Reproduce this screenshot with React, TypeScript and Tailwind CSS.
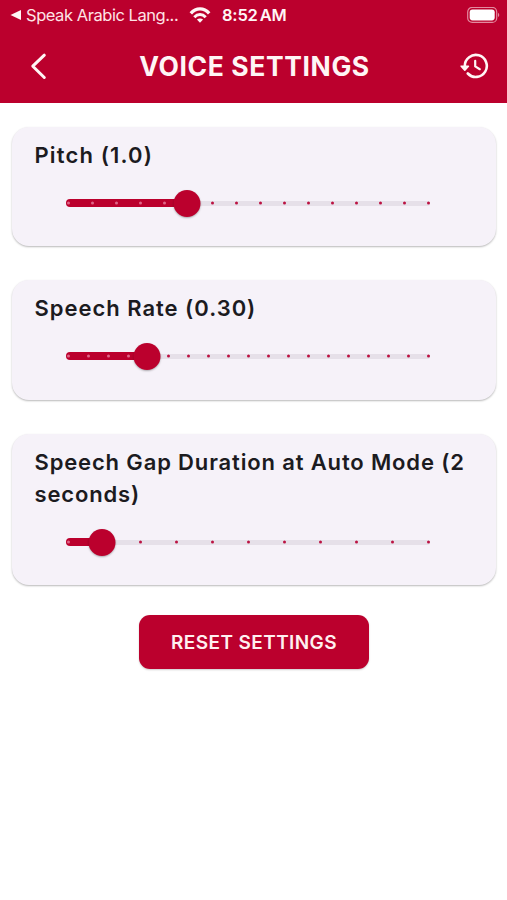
import React from "react";

type SettingProps = {
  title: string;
  steps: number;
  value: number;
  className: string;
};

function Slider({ steps, value }: { steps: number; value: number }) {
  const fill = `${(value / steps) * 100}%`;
  return (
    <div className="relative ml-[31px] flex h-7 w-[364px] items-center">
      <div className="h-[5px] w-full rounded-full bg-[#e6e0e9]" />
      <div
        className="absolute left-0 h-[8px] rounded-l-full bg-[#bb002d]"
        style={{ width: fill }}
      />
      <svg className="absolute left-0" width="364" height="4" viewBox="0 0 364 4">
        {Array.from({ length: steps + 1 }, (_, i) => (
          <circle
            key={i}
            cx={2.5 + (360 / steps) * i}
            cy="2"
            r="1.5"
            className={i < value ? "fill-[#df6688]" : "fill-[#bb1243]"}
          />
        ))}
      </svg>
      <div
        className="absolute size-[27px] -translate-x-1/2 rounded-full bg-[#bb002d] shadow-[0_1px_2px_rgba(0,0,0,0.3)]"
        style={{ left: fill }}
      />
    </div>
  );
}

function Setting({ title, steps, value, className }: SettingProps) {
  return (
    <section
      className={`flex flex-col justify-between rounded-[17px] bg-[#f6f2f9] pr-5 pl-[23px] pt-[12px] shadow-[0_1px_2px_rgba(0,0,0,0.28)] ${className}`}
    >
      <h2 className="-ml-[0.5px] text-[22px] leading-8 font-semibold text-[#1c1b1f]">
        {title}
      </h2>
      <Slider steps={steps} value={value} />
    </section>
  );
}

export default function App() {
  return (
    <div className="flex h-[900px] w-[507px] flex-col bg-white font-['Inter',sans-serif]">
      <header className="flex h-[103px] flex-col bg-[#bb002d] text-[#fff5f5]">
        <div className="flex h-[30px] items-center pl-[10px] pr-[7px]">
          <svg width="12" height="12" viewBox="0 0 12 12" fill="currentColor">
            <path d="M0.5 6 11 1v10z" />
          </svg>
          <span className="ml-[4px] w-[163px] text-[16.5px] leading-none tracking-[-0.45px] whitespace-nowrap text-[#ffe3e6]">
            Speak Arabic Lang...
          </span>
          <svg width="22" height="16" viewBox="0 0 22 16" fill="none" stroke="currentColor" strokeWidth="3.3">
            <path d="M1.8 6.3C7 .3 15 .3 20.2 6.3" />
            <path d="M5.3 10.2c3.3-3.5 8.1-3.5 11.4 0" strokeWidth="3" />
            <path d="M11 15.7 7.9 12.6c1.8-1.6 4.4-1.6 6.2 0z" fill="currentColor" stroke="none" />
          </svg>
          <span className="ml-[11px] text-[16.5px] leading-none font-semibold tracking-[-0.2px] whitespace-nowrap [word-spacing:-2px]">
            8:52 AM
          </span>
          <svg className="ml-auto" width="33" height="17" viewBox="0 0 33 17" fill="none">
            <rect x=".7" y=".4" width="29" height="15" rx="4.5" stroke="#e38a9f" strokeWidth="1.2" />
            <rect x="2.7" y="2.4" width="25" height="11" rx="2.8" fill="#fff" />
            <path d="M31 5.7c1.7.7 1.7 3.7 0 4.4z" fill="#e38a9f" />
          </svg>
        </div>
        <div className="flex h-[73px] items-center justify-between pl-[30px] pr-[17px]">
          <svg width="18" height="28" viewBox="0 0 18 28" fill="none" stroke="currentColor" strokeWidth="3" strokeLinecap="round" strokeLinejoin="round">
            <path d="M14.3 2.2 2.8 13.2l11.5 11.3" />
          </svg>
          <h1 className="ml-[1px] text-[26.5px] leading-none font-bold tracking-[0.6px] whitespace-nowrap">
            VOICE SETTINGS
          </h1>
          <svg width="30" height="28" viewBox="0 0 30 28" fill="none" stroke="currentColor" strokeWidth="2.6" strokeLinecap="round" strokeLinejoin="round">
            <path d="M4.8 14V12.9A11 11 0 1 1 7.8 20.5" />
            <path d="M1.2 13.2h7.2L4.8 17.2z" fill="currentColor" strokeWidth="1.6" />
            <path d="M15.2 7.8v5.6l4.6 2.8" strokeWidth="2.2" />
          </svg>
        </div>
      </header>
      <main className="flex flex-col pt-[24px] pr-[11px] pl-[12px]">
        <Setting title="Pitch (1.0)" steps={15} value={5} className="h-[119px] pb-[29px] tracking-[1.15px]" />
        <Setting title="Speech Rate (0.30)" steps={18} value={4} className="mt-[34px] h-[120px] pb-[30px] tracking-[0.98px]" />
        <Setting
          title="Speech Gap Duration at Auto Mode (2 seconds)"
          steps={10}
          value={1}
          className="mt-[34px] h-[151px] pb-[29px] tracking-[0.85px]"
        />
        <button className="mt-[30px] ml-[127px] h-[54px] w-[230px] rounded-[11px] bg-[#bb002d] text-[19px] leading-none font-semibold tracking-[0.4px] text-[#fff0f0] shadow-[0_1px_2px_rgba(0,0,0,0.2)]">
          RESET SETTINGS
        </button>
      </main>
    </div>
  );
}
